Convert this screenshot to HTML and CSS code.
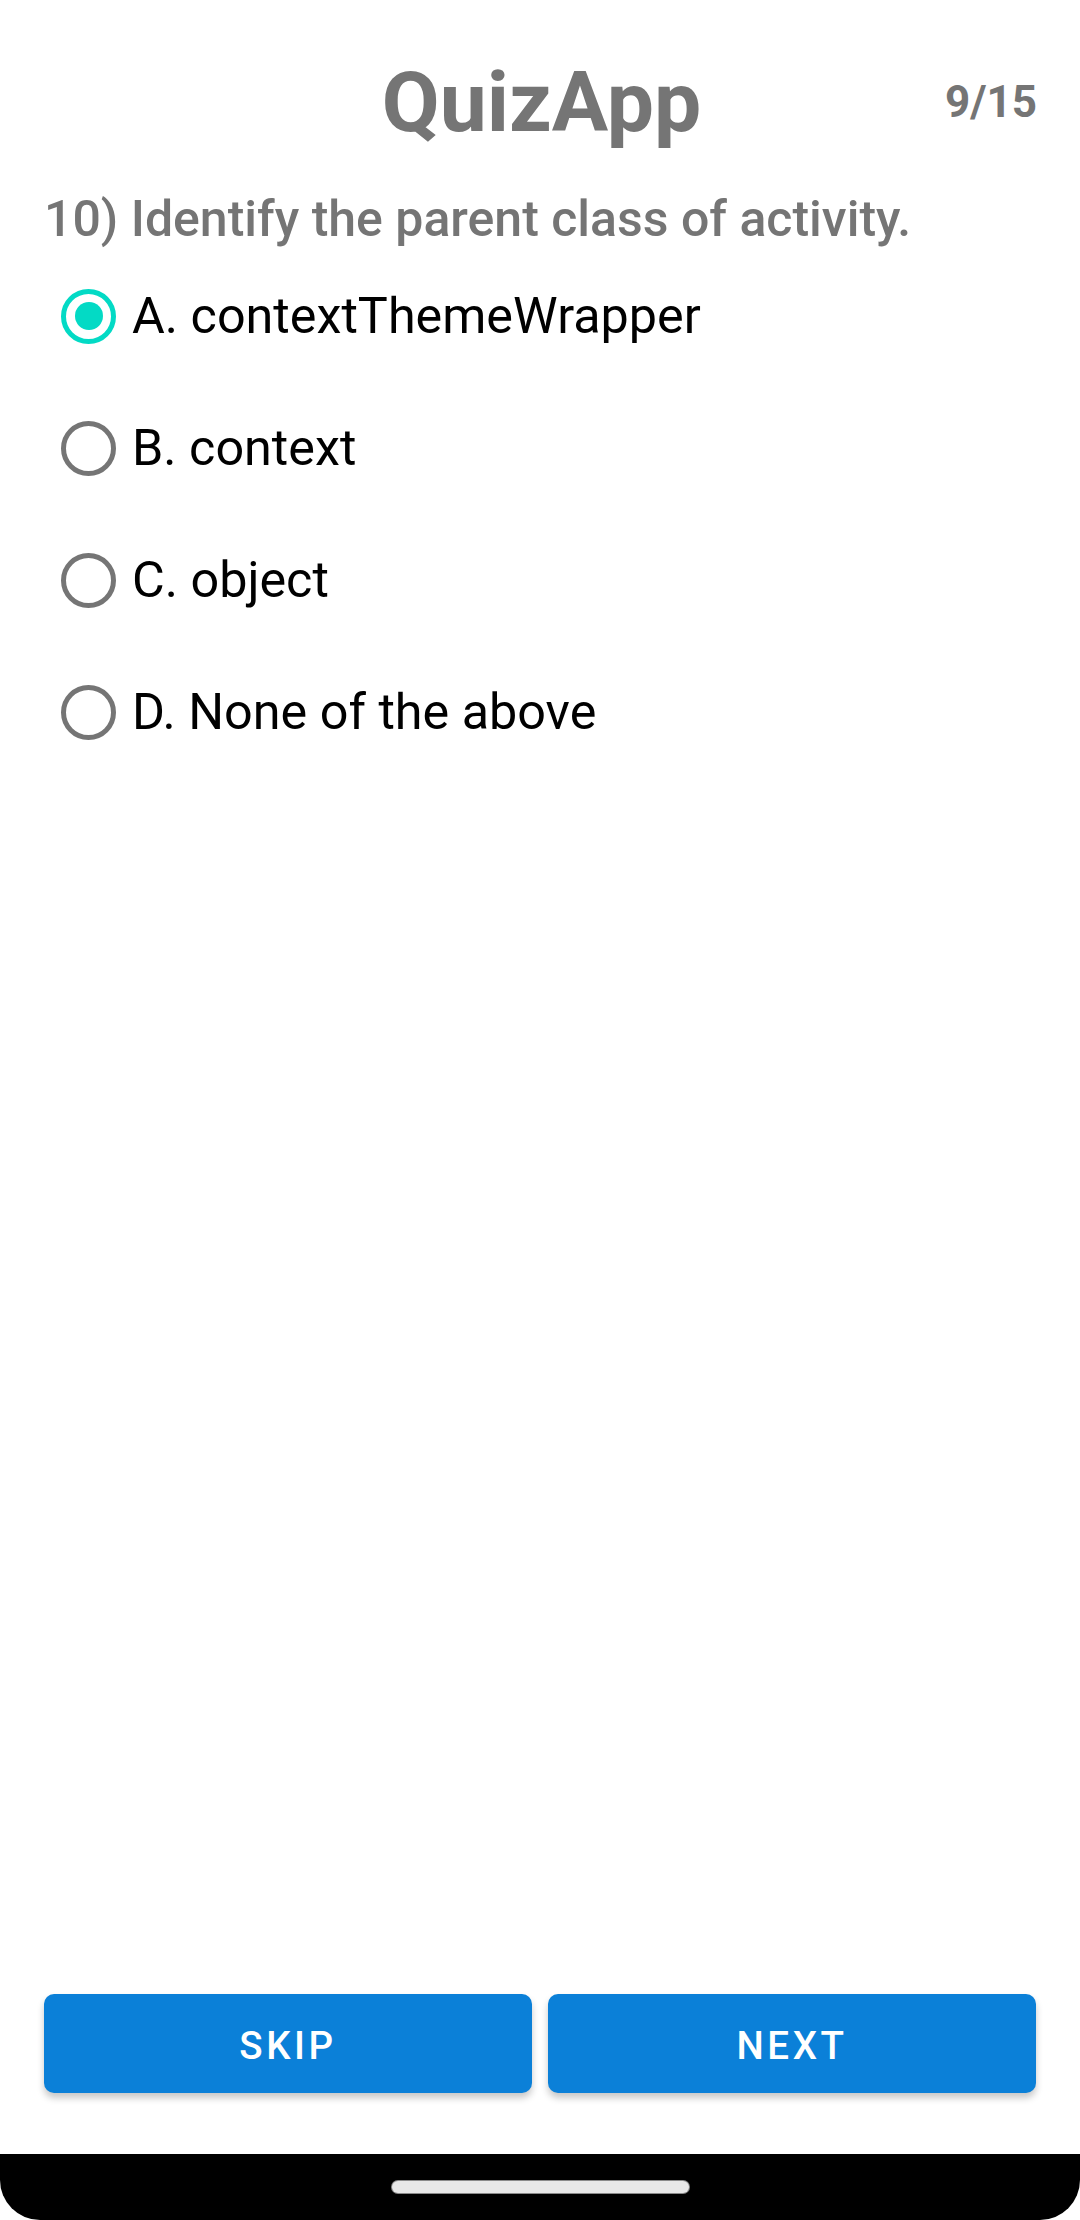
FILE: index.html
```html
<!DOCTYPE html>
<html lang="en">
<head>
<meta charset="utf-8">
<title>QuizApp</title>
<link rel="stylesheet" href="styles.css">
</head>
<body>
<div class="screen">
  <main class="content">
    <header class="top">
      <span class="top-spacer"></span>
      <h1 class="title">QuizApp</h1>
      <span class="counter">9/15</span>
    </header>
    <p class="question">10) Identify the parent class of activity.</p>
    <div class="options">
      <label class="option">
        <span class="radio radio-checked"><span class="radio-dot"></span></span>
        <span class="option-text">A. contextThemeWrapper</span>
      </label>
      <label class="option">
        <span class="radio"></span>
        <span class="option-text">B. context</span>
      </label>
      <label class="option">
        <span class="radio"></span>
        <span class="option-text">C. object</span>
      </label>
      <label class="option">
        <span class="radio"></span>
        <span class="option-text">D. None of the above</span>
      </label>
    </div>
  </main>
  <div class="actions">
    <button class="btn">SKIP</button>
    <button class="btn">NEXT</button>
  </div>
  <div class="navbar"><span class="handle"></span></div>
</div>
</body>
</html>
```

FILE: styles.css
```css
html, body {
  margin: 0;
  padding: 0;
  background: #ffffff;
}

body {
  font-family: Roboto, "Noto Sans", "Liberation Sans", sans-serif;
}

.screen {
  width: 1080px;
  height: 2220px;
  display: flex;
  flex-direction: column;
  background: #ffffff;
  overflow: hidden;
}

.content {
  flex: 1;
  display: flex;
  flex-direction: column;
}

.top {
  display: grid;
  grid-template-columns: 1fr auto 1fr;
  align-items: start;
  padding: 54px 43px 0 46px;
}

.title {
  margin: 0;
  font-size: 84px;
  line-height: 98px;
  font-weight: 700;
  color: #757575;
}

.counter {
  justify-self: end;
  margin-top: 22px;
  font-size: 44px;
  line-height: 52px;
  font-weight: 700;
  color: #757575;
}

.question {
  margin: 37px 0 0;
  padding: 0 44px;
  font-size: 50px;
  line-height: 60px;
  font-weight: 500;
  color: #757575;
}

.options {
  display: flex;
  flex-direction: column;
  padding-left: 61px;
  margin-top: 1px;
}

.option {
  height: 132px;
  display: flex;
  align-items: center;
  gap: 16px;
}

.radio {
  width: 55px;
  height: 55px;
  box-sizing: border-box;
  border: 5.5px solid #757575;
  border-radius: 50%;
  display: flex;
  align-items: center;
  justify-content: center;
  flex: none;
}

.radio-checked {
  border-color: #03dac5;
}

.radio-dot {
  width: 28px;
  height: 28px;
  border-radius: 50%;
  background: #03dac5;
}

.option-text {
  font-size: 50.3px;
  line-height: 58px;
  color: #000000;
}

.actions {
  display: flex;
  gap: 16px;
  padding: 0 44px;
  margin-bottom: 61px;
}

.btn {
  flex: 1;
  height: 99px;
  border: none;
  border-radius: 10px;
  background: #0b80d8;
  color: #ffffff;
  font-family: Roboto, "Noto Sans", "Liberation Sans", sans-serif;
  font-size: 38.5px;
  font-weight: 500;
  letter-spacing: 3.6px;
  box-shadow: 0 5px 7px rgba(0, 0, 0, 0.22);
  padding: 3px 0 0;
}

.navbar {
  height: 66px;
  background: #000000;
  border-radius: 0 0 40px 40px;
  display: flex;
  justify-content: center;
  padding-top: 27px;
  box-sizing: border-box;
}

.handle {
  width: 297px;
  height: 12px;
  border-radius: 6px;
  background: #e8e8e8;
  box-shadow: 0 0 0 1px #8a8a8a;
}
```
